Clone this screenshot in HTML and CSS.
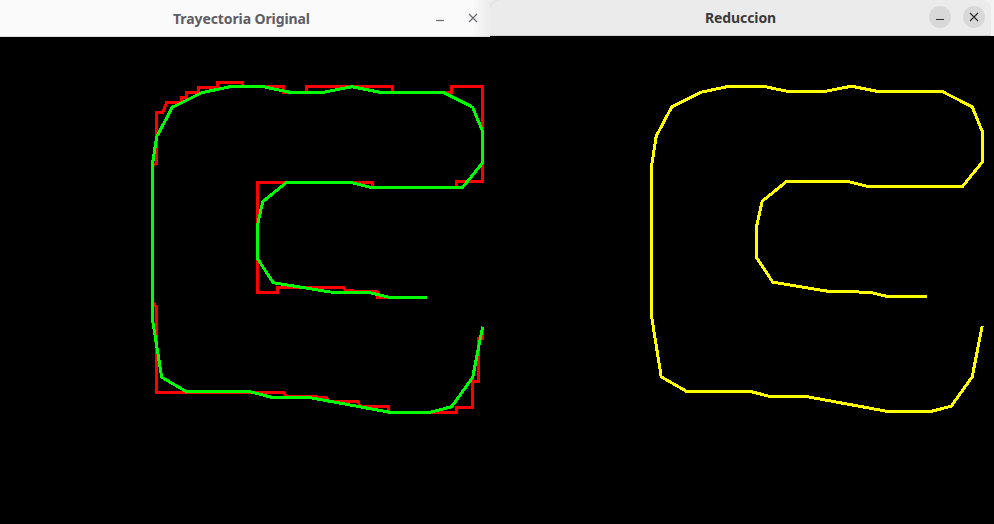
FILE: index.html
```html
<!DOCTYPE html>
<html>
<head>
<meta charset="utf-8">
<link rel="stylesheet" href="styles.css">
</head>
<body>
<div class="desk">
  <div class="win win-left">
    <div class="bar bar-left">
      <span class="title">Trayectoria Original</span>
      <div class="btns btns-left">
        <span class="btn"><svg width="12" height="12" viewBox="0 0 12 12"><path d="M2 8.5h8" stroke="#6a6870" stroke-width="1.2"/></svg></span>
        <span class="btn"><svg width="12" height="12" viewBox="0 0 12 12"><path d="M2 2l8 8M10 2l-8 8" stroke="#6a6870" stroke-width="1.2"/></svg></span>
      </div>
      <div class="shade"></div>
    </div>
    <div class="content">
      <svg class="canvas" width="490" height="487" viewBox="0 37 490 487">
        <polyline class="red" points="389.3,297.3 377.3,297.3 377.3,292 346,290.7 343.3,287.3 277.3,287.3 277.3,292.7 257.3,292.7 257.3,182.3 372.3,182.3 372.3,187 456.7,187 456.7,181.7 482.7,181.7 482.7,86.7 451.7,86.7 451.7,92.3 392.7,92.3 392.7,86.7 306.7,86.7 306.7,92.3 283.3,92.3 283.3,86 242.7,86 242.7,82.3 217.3,82.3 217.3,87.3 198.3,87.3 198.3,92.3 186.7,92.3 186.7,97.3 181.7,97.3 181.7,102.3 166.7,102.3 162.7,112.7 156.7,112.7 156.7,163.3 152.3,165 152.3,302 156.7,307 156.7,392.3 283.3,392.3 286.7,396 326.7,397.3 328.3,401.7 358.3,401.7 360,406.7 388.3,406.7 388.3,412.3 456.7,412.3 456.7,407.3 472.7,407.3 472.7,381.7 478.3,381.7 478.3,338.3 482.7,338.3 482.7,328.3"/>
        <polyline class="green" points="427.3,297.3 389.3,297.3 370,292.7 330,292 273.3,282.7 257.3,258.3 257.3,226 262.7,201.7 286.7,182.3 350,182.3 370,187.3 462.7,187.3 482.7,162.7 482.7,131.7 472.7,107.3 443.3,92.3 380,92.3 352,86.7 323.3,92.3 290,92.3 263.3,86.7 230,86.7 201.7,92.7 172.3,107.3 156.7,136.7 152.3,165 152.3,318.3 161.7,377.3 186.7,391.7 250,391.7 271.7,397.3 308.3,397.3 390,412.3 430,412.3 451.7,406.7 472.7,377.3 482.7,326.7"/>
      </svg>
    </div>
  </div>
  <div class="win win-right">
    <div class="bar bar-right">
      <span class="title">Reduccion</span>
      <div class="btns btns-right">
        <span class="btn round"><svg width="12" height="12" viewBox="0 0 12 12"><path d="M2 8.5h8" stroke="#2e2e2e" stroke-width="1.2"/></svg></span>
        <span class="btn round"><svg width="12" height="12" viewBox="0 0 12 12"><path d="M2 2l8 8M10 2l-8 8" stroke="#2e2e2e" stroke-width="1.2"/></svg></span>
      </div>
    </div>
    <div class="content">
      <svg class="canvas" width="501" height="488" viewBox="490 36 501 488">
        <polyline class="yellow" transform="translate(499.5,-0.5)" points="427.3,297.3 389.3,297.3 370,292.7 330,292 273.3,282.7 257.3,258.3 257.3,226 262.7,201.7 286.7,182.3 350,182.3 370,187.3 462.7,187.3 482.7,162.7 482.7,131.7 472.7,107.3 443.3,92.3 380,92.3 352,86.7 323.3,92.3 290,92.3 263.3,86.7 230,86.7 201.7,92.7 172.3,107.3 156.7,136.7 152.3,165 152.3,318.3 161.7,377.3 186.7,391.7 250,391.7 271.7,397.3 308.3,397.3 390,412.3 430,412.3 451.7,406.7 472.7,377.3 482.7,326.7"/>
      </svg>
    </div>
  </div>
  <div class="gap"></div>
</div>
</body>
</html>
```

FILE: styles.css
```css
html, body {
  margin: 0;
  padding: 0;
  background: #000;
}
.desk {
  display: flex;
  width: 994px;
  height: 524px;
  overflow: hidden;
  background: #f2f2f2;
}
.win {
  display: flex;
  flex-direction: column;
  height: 524px;
}
.win-left {
  width: 490px;
  flex: none;
}
.win-right {
  width: 501px;
  flex: none;
  border-radius: 12px 12px 0 0;
  overflow: hidden;
  background: #ebebeb;
  box-shadow: -2px 0 4px rgba(0,0,0,0.12);
}
.gap {
  flex: 1;
  display: flex;
  flex-direction: column;
  background: linear-gradient(#f4f4f4 0, #f4f4f4 36px, #000 36px);
}
.bar {
  position: relative;
  display: flex;
  align-items: center;
  justify-content: center;
  flex: none;
  font-family: "Noto Sans", "Open Sans", sans-serif;
  font-weight: 700;
  font-size: 14px;
}
.bar-left {
  height: 36px;
  background: #fafafa;
  border-bottom: 1px solid #dcdcdc;
  color: #5e5c64;
  padding-right: 7px;
}
.bar-right {
  height: 35px;
  background: #ebebeb;
  border-bottom: 1px solid #d0d0d0;
  color: #3a3a3a;
}
.title {
  letter-spacing: -0.1px;
}
.btns {
  position: absolute;
  top: 0;
  bottom: 0;
  display: flex;
  align-items: center;
}
.btns-left {
  right: 5px;
  gap: 9px;
}
.btns-right {
  right: 6px;
  gap: 12px;
  top: -1px;
}
.btn {
  width: 24px;
  height: 24px;
  display: flex;
  align-items: center;
  justify-content: center;
}
.btn.round {
  width: 22px;
  height: 22px;
  border-radius: 50%;
  background: #d8d8d8;
}
.shade {
  position: absolute;
  right: 0;
  top: 0;
  bottom: 0;
  width: 18px;
  background: linear-gradient(90deg, rgba(0,0,0,0), rgba(0,0,0,0.06));
}
.content {
  flex: 1;
  background: #000;
  overflow: hidden;
}
.canvas {
  display: block;
}
.red, .green, .yellow {
  fill: none;
  stroke-width: 3;
  stroke-linejoin: miter;
  shape-rendering: crispEdges;
}
.red {
  stroke: #ff0000;
}
.green {
  stroke: #00ff00;
}
.yellow {
  stroke: #ffff00;
}
```
